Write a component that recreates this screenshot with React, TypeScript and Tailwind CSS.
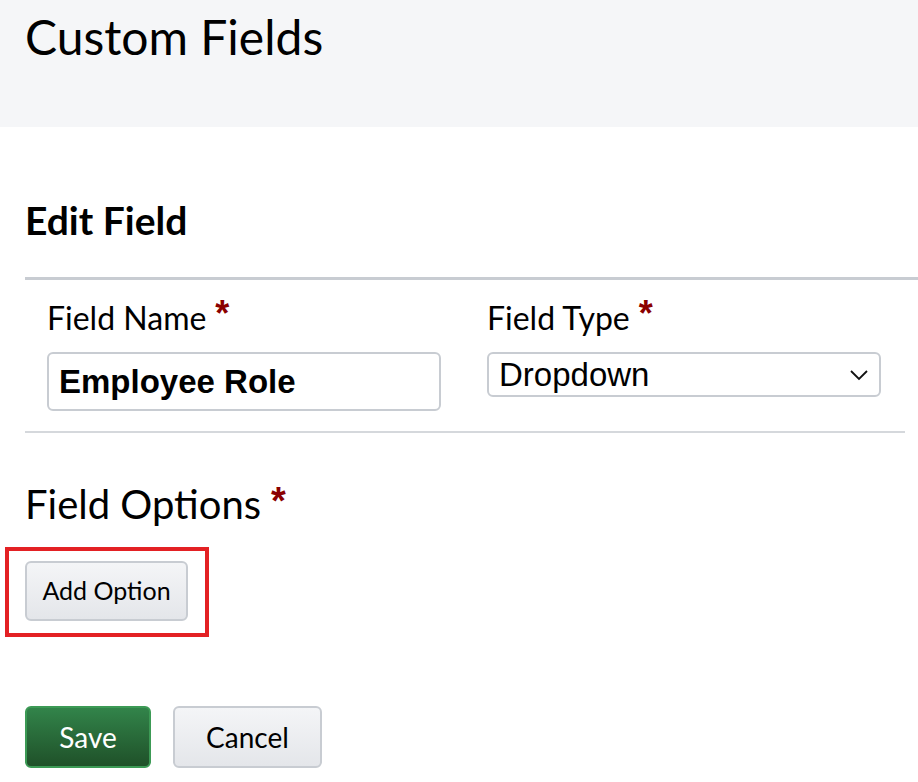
const star = "'Liberation Sans', Arial, sans-serif";

export default function App() {
    return (
        <div className="min-h-screen bg-white text-black" style={{ fontFamily: "Lato, 'Noto Sans', sans-serif" }}>
            {/* PAGE HEADER */}
            <header className="h-[127px] bg-[#f5f6f8] pl-[25px] pt-[9px]">
                <h1 className="text-[48px] leading-[56px] font-normal">Custom Fields</h1>
            </header>

            <main className="pl-[25px] pr-[13px]">
                <h2 className="pt-[71px] pb-[35px] text-[39px] leading-[44px] font-bold">Edit Field</h2>

                {/* FIELD ROW */}
                <div className="-mr-[13px] border-t-[3px] border-[#c8ccd2]">
                    <div className="mr-[13px] grid grid-cols-[394px_394px] gap-x-[46px] border-b-2 border-[#d5d8dc] pl-[22px] pt-[20px] pb-[20px]">
                        <div>
                            <label className="flex items-start text-[32px] leading-[36px]">
                                Field Name
                                <span className="ml-[9px] -mt-[4px] text-[36px] font-bold leading-[36px] text-[#8b0000]" style={{ fontFamily: star }}>*</span>
                            </label>
                            <div className="mt-[16px] flex h-[59px] items-center rounded-[6px] border-2 border-[#c8ccd2] px-[10px]">
                                <span className="text-[33px] font-bold" style={{ fontFamily: "'Liberation Sans', Arial, sans-serif" }}>
                                    Employee Role
                                </span>
                            </div>
                        </div>
                        <div>
                            <label className="flex items-start text-[32px] leading-[36px]">
                                Field Type
                                <span className="ml-[9px] -mt-[4px] text-[36px] font-bold leading-[36px] text-[#8b0000]" style={{ fontFamily: star }}>*</span>
                            </label>
                            <div className="mt-[16px] flex h-[45px] items-center justify-between rounded-[6px] border-2 border-[#c8ccd2] pl-[10px] pr-[10px]">
                                <span className="text-[33px]" style={{ fontFamily: "'Liberation Sans', Arial, sans-serif" }}>
                                    Dropdown
                                </span>
                                <svg width="20" height="12" viewBox="0 0 20 12" fill="none" stroke="#111" strokeWidth="1.8">
                                    <path d="M2 2 L10 10 L18 2" />
                                </svg>
                            </div>
                        </div>
                    </div>
                </div>

                {/* FIELD OPTIONS */}
                <h3 className="mt-[47px] flex items-start text-[40px] leading-[48px]">
                    Field Options
                    <span className="ml-[10px] mt-[2px] text-[38px] font-bold leading-[38px] text-[#8b0000]" style={{ fontFamily: star }}>*</span>
                </h3>
                <div className="-ml-[20px] mt-[19px] inline-flex border-4 border-[#e32124] pt-[10px] pb-[12px] pl-[16px] pr-[17px]">
                    <button className="h-[60px] w-[163px] rounded-[6px] border-2 border-[#c8ccd2] bg-gradient-to-b from-[#f4f5f7] to-[#e4e6ea] text-[25px]">
                        Add Option
                    </button>
                </div>

                {/* ACTIONS */}
                <div className="mt-[69px] flex gap-[22px]">
                    <button className="h-[62px] w-[126px] rounded-[6px] border-2 border-[#3c9a55] bg-gradient-to-b from-[#32844a] to-[#1f5129] text-[28px] text-white">
                        Save
                    </button>
                    <button className="h-[62px] w-[149px] rounded-[6px] border-2 border-[#c8ccd2] bg-gradient-to-b from-[#f4f5f7] to-[#e4e6ea] text-[28px]">
                        Cancel
                    </button>
                </div>
            </main>
        </div>
    );
}
